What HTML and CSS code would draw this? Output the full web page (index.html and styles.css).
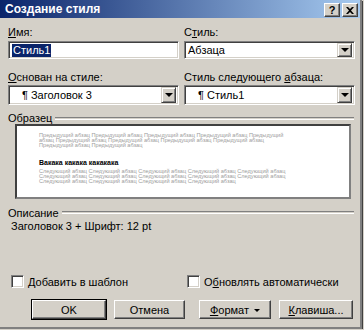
FILE: index.html
```html
<!DOCTYPE html>
<html lang="ru">
<head>
  <meta charset="UTF-8" />
  <title>Создание стиля</title>
  <link rel="stylesheet" href="styles.css">
</head>
<body>
  <div class="window">
    <div class="titlebar">
      <span class="title">Создание стиля</span>
      <div class="caption-btns">
        <span class="cbtn">?</span>
        <span class="cbtn close">
          <svg width="8" height="7" viewBox="0 0 8 7"><path d="M0 0h2l2 2 2-2h2L5 3.5 8 7H6L4 5 2 7H0l3-3.5z" fill="#000"/></svg>
        </span>
      </div>
    </div>

    <div class="client">
      <div class="fields">
        <div class="field">
          <div class="label"><u>И</u>мя:</div>
          <div class="textbox"><span class="selected">Стиль1</span></div>
        </div>
        <div class="field">
          <div class="label">С<u>т</u>иль:</div>
          <div class="combo"><span class="value">Абзаца</span><span class="drop"><i class="arrow"></i></span></div>
        </div>
        <div class="field">
          <div class="label"><u>О</u>снован на стиле:</div>
          <div class="combo tall"><span class="value indent">¶ Заголовок 3</span><span class="drop"><i class="arrow"></i></span></div>
        </div>
        <div class="field">
          <div class="label">Стиль следующего <u>а</u>бзаца:</div>
          <div class="combo tall"><span class="value indent">¶ Стиль1</span><span class="drop"><i class="arrow"></i></span></div>
        </div>
      </div>

      <div class="group-title"><span>Образец</span><span class="etch"></span></div>
      <div class="preview">
        <p class="prev-text">Предыдущий абзац Предыдущий абзац Предыдущий абзац Предыдущий абзац Предыдущий абзац Предыдущий абзац Предыдущий абзац Предыдущий абзац Предыдущий абзац Предыдущий абзац Предыдущий абзац</p>
        <p class="sample">Вакака какака какакака</p>
        <p class="prev-text next">Следующий абзац Следующий абзац Следующий абзац Следующий абзац Следующий абзац Следующий абзац Следующий абзац Следующий абзац Следующий абзац Следующий абзац Следующий абзац Следующий абзац Следующий абзац Следующий абзац</p>
      </div>

      <div class="group-title desc-title"><span>Описание</span><span class="etch"></span></div>
      <div class="description">Заголовок 3 + Шрифт: 12 pt</div>

      <div class="checks">
        <label class="check"><span class="box"></span><span><u>Д</u>обавить в шаблон</span></label>
        <label class="check"><span class="box"></span><span>О<u>б</u>новлять автоматически</span></label>
      </div>

      <div class="buttons">
        <button class="btn default">OK</button>
        <button class="btn">Отмена</button>
        <button class="btn"><u>Ф</u>ормат <i class="small-arrow"></i></button>
        <button class="btn"><u>К</u>лавиша...</button>
      </div>
    </div>
  </div>
</body>
</html>
```

FILE: styles.css
```css
body {
  margin: 0;
  background: #d4d0c8;
  font-family: "Liberation Sans", Arial, sans-serif;
  font-size: 11px;
  color: #000;
}
u {
  text-decoration: underline;
  text-underline-offset: 1px;
}
.window {
  width: 360px;
  height: 327px;
  border-right: 2px solid #808080;
  border-bottom: 2px solid #808080;
  box-shadow: 1px 1px 0 #404040;
  background: #d4d0c8;
}
.titlebar {
  height: 18px;
  display: flex;
  align-items: center;
  justify-content: space-between;
  background: linear-gradient(to right, #0a246a, #a6caf0);
  padding: 0 2px 0 5px;
}
.title {
  color: #fff;
  font-weight: bold;
  font-size: 12px;
}
.caption-btns {
  display: flex;
  gap: 2px;
  margin-top: 2px;
}
.cbtn {
  width: 14px;
  height: 12px;
  background: #d4d0c8;
  border-top: 1px solid #fff;
  border-left: 1px solid #fff;
  border-right: 1px solid #404040;
  border-bottom: 1px solid #404040;
  box-shadow: inset -1px -1px 0 #808080;
  font-weight: bold;
  font-size: 11px;
  line-height: 12px;
  display: flex;
  align-items: center;
  justify-content: center;
}
.client {
  padding: 8px 6px 0 8px;
}
.fields {
  display: grid;
  grid-template-columns: 171px 171px;
  column-gap: 5px;
  row-gap: 12px;
}
.label {
  height: 13px;
  line-height: 13px;
  margin-bottom: 2px;
}
.textbox, .combo {
  height: 18px;
  box-sizing: border-box;
  background: #fff;
  border-top: 1px solid #808080;
  border-left: 1px solid #808080;
  border-right: 1px solid #fff;
  border-bottom: 1px solid #fff;
  box-shadow: inset 1px 1px 0 #404040, inset -1px -1px 0 #d4d0c8;
  display: flex;
  align-items: center;
  padding: 0 2px 0 3px;
}
.combo.tall {
  height: 20px;
  margin-top: -1px;
}
.selected {
  background: #0a246a;
  color: #fff;
  line-height: 13px;
  padding: 0 1px;
}
.value {
  flex: 1;
}
.value.indent {
  padding-left: 10px;
}
.drop {
  width: 13px;
  height: 12px;
  background: #d4d0c8;
  border-top: 1px solid #d4d0c8;
  border-left: 1px solid #d4d0c8;
  border-right: 1px solid #404040;
  border-bottom: 1px solid #404040;
  box-shadow: inset 1px 1px 0 #fff, inset -1px -1px 0 #808080;
  display: flex;
  align-items: center;
  justify-content: center;
}
.combo.tall .drop {
  height: 14px;
}
.arrow {
  width: 0;
  height: 0;
  border-left: 4px solid transparent;
  border-right: 4px solid transparent;
  border-top: 4px solid #000;
}
.group-title {
  display: flex;
  align-items: center;
  height: 12px;
  margin-top: 7px;
  gap: 3px;
}
.etch {
  flex: 1;
  height: 1px;
  border-top: 1px solid #808080;
  border-bottom: 1px solid #fff;
}
.preview {
  margin: 0 3px 0 7px;
  height: 75px;
  box-sizing: border-box;
  background: #fff;
  border: 2px solid #404040;
  border-right-color: #808080;
  border-bottom-color: #808080;
  padding: 7px 0 0 22px;
}
.prev-text {
  margin: 0;
  font-size: 5.6px;
  line-height: 4.8px;
  color: #9c9c9c;
  width: 250px;
}
.prev-text.next {
  width: 266px;
}
.sample {
  margin: 12px 0 2px;
  font-size: 7px;
  line-height: 8px;
  font-weight: bold;
}
.desc-title {
  margin-top: 7px;
  height: 13px;
}
.description {
  padding-left: 3px;
  height: 13px;
  line-height: 13px;
  margin-top: 1px;
}
.checks {
  display: grid;
  grid-template-columns: 176px 170px;
  margin-top: 42px;
  padding-left: 3px;
}
.check {
  display: flex;
  align-items: center;
  gap: 4px;
  height: 13px;
}
.box {
  width: 9px;
  height: 9px;
  background: #fff;
  border-top: 1px solid #808080;
  border-left: 1px solid #808080;
  border-right: 1px solid #fff;
  border-bottom: 1px solid #fff;
  box-shadow: inset 1px 1px 0 #404040, inset -1px -1px 0 #d4d0c8;
  padding: 1px;
}
.buttons {
  display: flex;
  margin-top: 12px;
  padding-left: 24px;
  gap: 8px;
}
.btn {
  font-family: inherit;
  font-size: 11px;
  width: 74px;
  height: 19px;
  padding: 0;
  background: #d4d0c8;
  border-top: 1px solid #fff;
  border-left: 1px solid #fff;
  border-right: 1px solid #404040;
  border-bottom: 1px solid #404040;
  box-shadow: inset -1px -1px 0 #808080;
  color: #000;
}
.btn.default {
  outline: 1px solid #000;
}
.btn:nth-child(2) {
  width: 71px;
}
.btn:nth-child(3) {
  margin-left: 6px;
  width: 72px;
}
.small-arrow {
  display: inline-block;
  vertical-align: middle;
  margin-left: 2px;
  border-left: 3px solid transparent;
  border-right: 3px solid transparent;
  border-top: 3px solid #000;
}
```
